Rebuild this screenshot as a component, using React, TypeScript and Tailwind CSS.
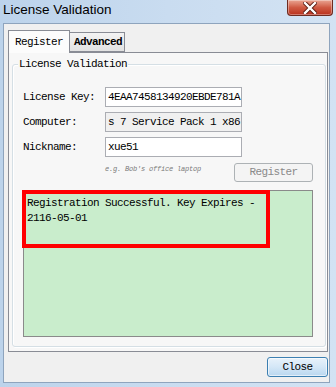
import React from 'react';

const mono = "font-['Liberation_Mono','DejaVu_Sans_Mono',monospace]";

export default function App() {
  return (
    <div className="w-[336px] h-[387px] bg-gradient-to-r from-[#bcd3eb] via-[#c9dcf0] to-[#d3e3f3] flex flex-col overflow-hidden">
      {/* title bar */}
      <div className="h-[23px] flex items-start justify-between shrink-0">
        <div className="pl-[3px] pt-[1px] text-[13.5px] leading-[18px] text-black font-['Liberation_Sans',Arial,sans-serif]">
          License Validation
        </div>
        <div className="mr-[3px] w-[46px] h-[16px] rounded-b-[4px] border border-t-0 border-[#6e2b20] bg-gradient-to-b from-[#e9a593] via-[#cf5a43] to-[#b9301c] flex items-center justify-center shadow-[inset_0_0_0_1px_rgba(255,255,255,0.35)]">
          <svg width="14" height="12" viewBox="0 0 14 12">
            <path d="M2 1 L12 11 M12 1 L2 11" stroke="#5a1a10" strokeWidth="4.2" strokeLinecap="square" />
            <path d="M2 1 L12 11 M12 1 L2 11" stroke="#ffffff" strokeWidth="2.4" strokeLinecap="square" />
          </svg>
        </div>
      </div>

      {/* client area */}
      <div className={`flex-1 ml-[3px] mr-[6px] mb-[4px] border border-[#8ea4bd] bg-[#f0f0f0] pl-[4px] pr-[1px] pt-[6px] flex flex-col ${mono} text-[11px] tracking-[-0.6px] text-black`}>
        {/* tabs */}
        <div className="flex items-end h-[23px] relative z-10">
          <div className="w-[62px] h-[23px] border border-b-0 border-[#898c95] bg-[#fcfcfc] flex items-center pl-[6px]">
            Register
          </div>
          <div className="w-[55px] h-[20px] mb-[1px] border border-l-0 border-[#898c95] bg-gradient-to-b from-[#f3f3f3] to-[#e2e2e2] flex items-center pl-[4px] font-bold">
            Advanced
          </div>
        </div>

        {/* tab page */}
        <div className="-mt-px w-[320px] h-[300px] border border-[#898c95] bg-[#f7f7f7] pl-[3px] pr-[1px] pt-[11px] pb-[4px] flex flex-col">
          {/* group box */}
          <div className="relative flex-1 border border-[#d5dfe5] rounded-[3px] shadow-[inset_1px_1px_0_#ffffff,1px_1px_0_#ffffff] pl-[10px] pr-[12px] pt-[22px] pb-[9px] flex flex-col">
            <div className="absolute -top-[8px] left-[5px] px-[1px] bg-[#f7f7f7] leading-[14px]">
              License Validation
            </div>

            <div className="flex flex-col gap-[5px]">
              <div className="flex items-center">
                <div className="w-[82px]">License Key:</div>
                <div className="w-[137px] h-[20px] border border-[#abadb3] bg-white pl-[2px] flex items-center whitespace-nowrap overflow-hidden">
                  4EAA7458134920EBDE781A
                </div>
              </div>
              <div className="flex items-center">
                <div className="w-[82px]">Computer:</div>
                <div className="w-[137px] h-[20px] border border-[#abadb3] bg-[#f0f0f0] pl-[2px] flex items-center whitespace-nowrap overflow-hidden">
                  s 7 Service Pack 1 x86
                </div>
              </div>
              <div className="flex items-center">
                <div className="w-[82px]">Nickname:</div>
                <div className="w-[137px] h-[20px] border border-[#abadb3] bg-white pl-[2px] flex items-center">
                  xue51
                </div>
              </div>
            </div>

            <div className="flex items-start mt-[6px]">
              <div className="w-[82px]" />
              <div className="flex-1 pt-[1px] text-[7px] leading-[10px] tracking-[-0.2px] italic text-[#7a7a7a]">
                e.g. Bob's office laptop
              </div>
              <div className="w-[79px] h-[19px] rounded-[3px] border border-[#adb2b5] bg-[#f4f4f4] text-[#8a8a8a] flex items-center justify-center">
                Register
              </div>
            </div>

            <div className="relative flex-1 mt-[8px] border border-[#8a8a8a] bg-[#c9edcc] pl-[3px] pt-[5px] leading-[15px]">
              <div>Registration Successful. Key Expires -</div>
              <div>2116-05-01</div>
              <div className="absolute -left-[2px] -top-[1px] w-[248px] h-[58px] border-[4px] border-[#ff0000]" />
            </div>
          </div>
        </div>

        {/* bottom buttons */}
        <div className="flex justify-end mt-[5px]">
          <div className="w-[61px] h-[20px] rounded-[3px] border border-[#3c7fb1] bg-gradient-to-b from-[#e8f2fb] via-[#d4e7f7] to-[#b9d7ef] shadow-[inset_0_0_0_1px_rgba(255,255,255,0.6)] flex items-center justify-center">
            Close
          </div>
        </div>
      </div>
    </div>
  );
}
